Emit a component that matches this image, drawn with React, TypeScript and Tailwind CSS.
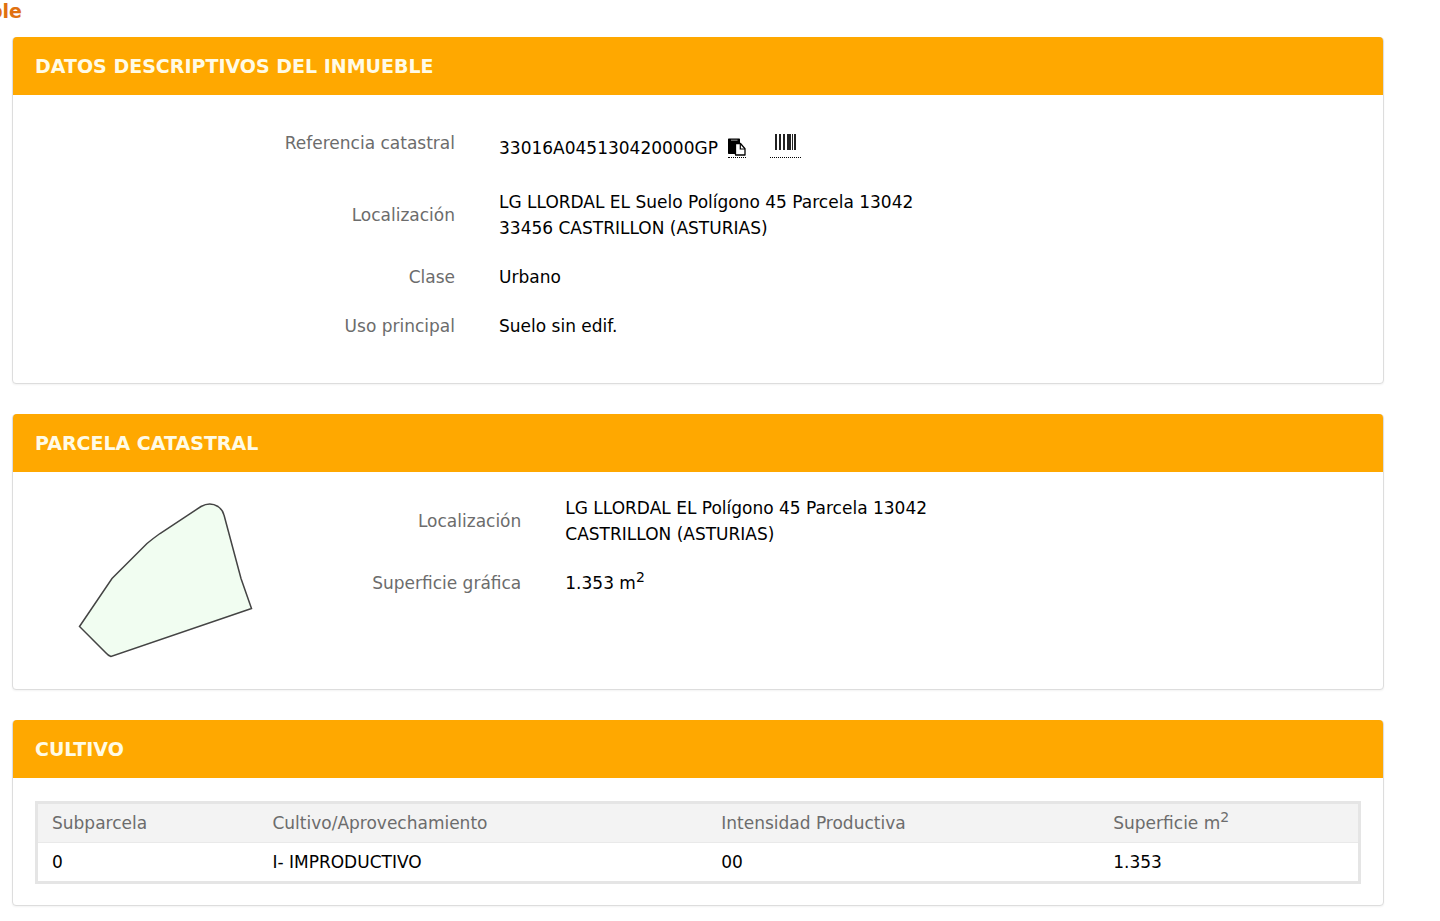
import React from 'react';

type FieldProps = {
  label: string;
  labelClass: string;
  children: React.ReactNode;
};

const cultivos = [
  { subparcela: '0', cultivo: 'I- IMPRODUCTIVO', intensidad: '00', superficie: '1.353' },
];

const Panel: React.FC<{ title: string; children: React.ReactNode }> = ({ title, children }) => (
  <section className="rounded border border-[#dddddd] bg-white shadow-xs">
    <h2 className="-mt-px rounded-t bg-[#ffa800] px-[22px] py-4 text-[19px] leading-[26px] font-bold text-[#fffbe6]">
      {title}
    </h2>
    {children}
  </section>
);

const Field: React.FC<FieldProps> = ({ label, labelClass, children }) => (
  <div className="mb-[23px] flex">
    <dt className={`shrink-0 px-[22px] text-right text-[#6c6c6c] ${labelClass}`}>{label}</dt>
    <dd className="grow px-[22px]">{children}</dd>
  </div>
);

const CopyIcon: React.FC = () => (
  <svg width="18" height="18" viewBox="0 0 18 18" aria-hidden="true">
    <path d="M0 1.5C0 .9.4.5 1 .5h10c.6 0 1 .4 1 1V5H7v11H1c-.6 0-1-.4-1-1z" fill="#000" />
    <path d="M3 2.2h6.5" stroke="#999" strokeWidth="1" />
    <path d="M7.5 5.500h5l4.500 5.200V17H7.500z" fill="#fff" stroke="#000" strokeWidth="1.300" strokeLinejoin="round" />
    <path d="M12.300 5.500v5.500H17" fill="none" stroke="#000" strokeWidth="1.200" />
  </svg>
);

const BarcodeIcon: React.FC = () => (
  <svg width="21" height="16" viewBox="0 0 21 16" aria-hidden="true">
    <path d="M0 0h2v16H0zM4 0h2v16H4zM8 0h2v16H8zM12 0h4v16h-4zM17 0h1v16h-1zM19 0h2v16h-2z" fill="#222" />
  </svg>
);

const App: React.FC = () => {
  return (
    <main className="bg-white pr-14 pb-4 font-['DejaVu_Sans',Verdana,sans-serif] text-[17px] leading-[26px] text-black">
      {/* Title runs off the left edge */}
      <h1 className="mb-3.5 flex w-[22px] justify-end overflow-hidden text-[19px] leading-[23px] font-bold text-[#e0700f]">
        ble
      </h1>

      <div className="flex flex-col gap-[30px] pl-3">
        <Panel title="DATOS DESCRIPTIVOS DEL INMUEBLE">
          <dl className="px-[22px] pt-[35px] pb-[21px]">
            <Field label="Referencia catastral" labelClass="w-1/3">
              <div className="flex h-9 items-center">
                <span>33016A045130420000GP</span>
                <button type="button" aria-label="Copiar" className="ml-2.5 border-b border-dotted border-black pb-px">
                  <CopyIcon />
                </button>
                <button
                  type="button"
                  aria-label="Código de barras"
                  className="mt-1 ml-6 flex h-6 items-start self-start border-b border-dotted border-black px-[5px]"
                >
                  <BarcodeIcon />
                </button>
              </div>
            </Field>
            <Field label="Localización" labelClass="w-1/3 self-center">
              LG LLORDAL EL Suelo Polígono 45 Parcela 13042
              <br />
              33456 CASTRILLON (ASTURIAS)
            </Field>
            <Field label="Clase" labelClass="w-1/3">Urbano</Field>
            <Field label="Uso principal" labelClass="w-1/3">Suelo sin edif.</Field>
          </dl>
        </Panel>

        <Panel title="PARCELA CATASTRAL">
          <div className="flex px-[22px] pt-[23px]">
            <div className="w-1/6 shrink-0 pb-[22px] pl-[22px]">
              <svg width="198" height="172" viewBox="57 495 198 172" role="img" aria-label="Parcela">
                <path
                  d="M79.500 626.500L112 578.500L147 543.500Q153 538.500 160 533.500L201 506.500Q210 501.500 218 506.500Q223 510 224 515L241 578.500L251.500 608.500L111 656.500Q108 655.500 105 652z"
                  fill="#f1fdf1"
                  stroke="#444"
                  strokeWidth="1.5"
                />
              </svg>
            </div>
            <dl className="grow">
              <Field label="Localización" labelClass="w-[26%] self-center">
                LG LLORDAL EL Polígono 45 Parcela 13042
                <br />
                CASTRILLON (ASTURIAS)
              </Field>
              <Field label="Superficie gráfica" labelClass="w-[26%]">
                1.353 m<sup className="text-sm leading-none">2</sup>
              </Field>
            </dl>
          </div>
        </Panel>

        <Panel title="CULTIVO">
          <div className="px-[22px] pt-[23px] pb-[21px]">
            <table className="w-full table-fixed border-separate border-spacing-0 border-3 border-[#e5e5e5] text-left">
              <thead className="bg-[#f3f3f3] text-[#6c6c6c]">
                <tr>
                  <th className="w-[16.7%] border-b border-[#e9e9e9] px-3.5 py-1.5 font-normal">Subparcela</th>
                  <th className="w-[34%] border-b border-[#e9e9e9] px-3.5 py-1.5 font-normal">Cultivo/Aprovechamiento</th>
                  <th className="w-[29.7%] border-b border-[#e9e9e9] px-3.5 py-1.5 font-normal">Intensidad Productiva</th>
                  <th className="border-b border-[#e9e9e9] px-3.5 py-1.5 font-normal">
                    Superficie m<sup className="text-sm leading-none">2</sup>
                  </th>
                </tr>
              </thead>
              <tbody>
                {cultivos.map((row) => (
                  <tr key={row.subparcela}>
                    <td className="px-3.5 py-1.5">{row.subparcela}</td>
                    <td className="px-3.5 py-1.5">{row.cultivo}</td>
                    <td className="px-3.5 py-1.5">{row.intensidad}</td>
                    <td className="px-3.5 py-1.5">{row.superficie}</td>
                  </tr>
                ))}
              </tbody>
            </table>
          </div>
        </Panel>
      </div>
    </main>
  );
};

export default App;
